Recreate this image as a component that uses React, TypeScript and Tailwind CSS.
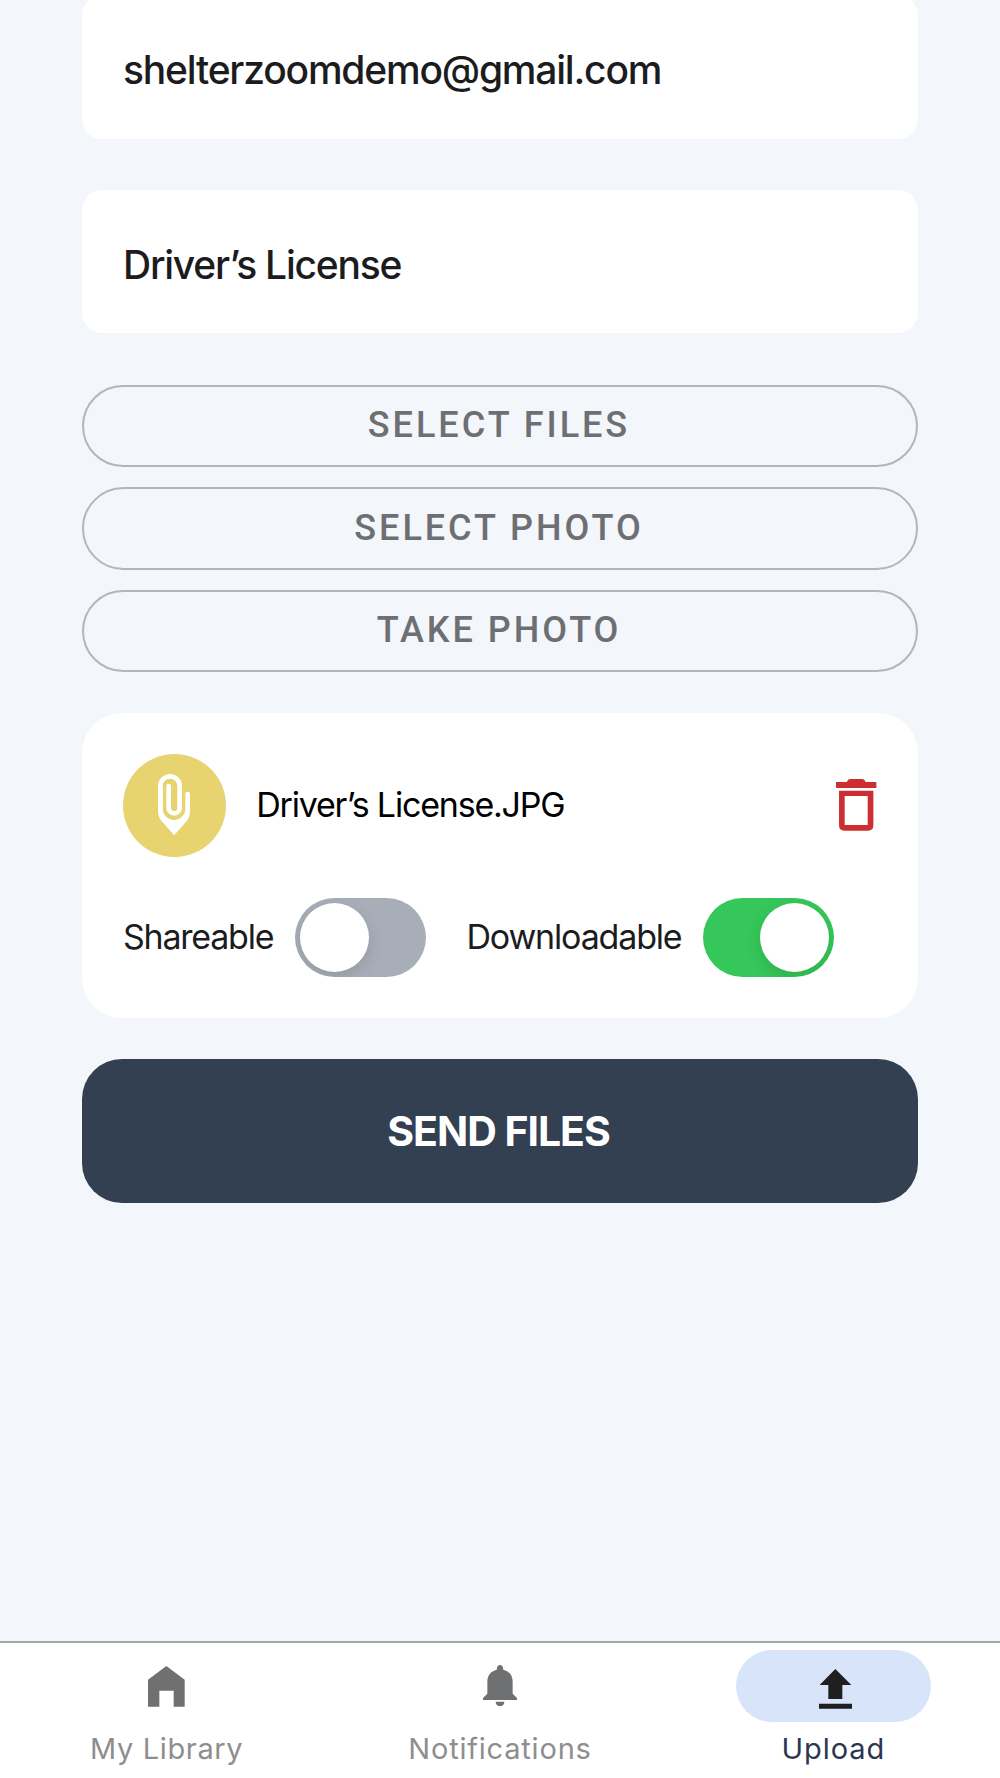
import React from "react";

function PaperclipIcon() {
  return (
    <svg viewBox="0 0 96 186" className="h-[62px] w-[32px]" fill="none">
      <path
        d="M32 36 V101 A16.5 17 0 0 0 65 101 V36 A29 29 0 0 0 7 36 V106"
        stroke="#fff"
        strokeWidth="14"
        strokeLinecap="round"
        strokeLinejoin="round"
      />
      <path
        d="M0 36 V110 Q0 130 14 145 L48.5 184 L83 145 Q96 130 96 110 V60 A7 7 0 0 0 82 60 V103 A34 35 0 0 1 14 103 V36 Z"
        fill="#fff"
      />
    </svg>
  );
}

function TrashIcon() {
  return (
    <svg viewBox="0 0 121 156" className="h-[52px] w-[40.4px]" fill="#cd2e31">
      <path d="M0 9 H32 Q36 0 42 0 H79 Q85 0 89 9 H121 V27 H0 Z" />
      <path
        fillRule="evenodd"
        d="M9 35 H112 V139 Q112 155 96 155 H25 Q9 155 9 139 Z M26 51 V138 H95 V51 Z"
      />
    </svg>
  );
}

function HomeIcon() {
  return (
    <svg viewBox="0 0 110 122" className="h-[40.7px] w-[36.7px]" fill="#6f7072">
      <path d="M55 0 L110 41 V122 H77 V74 H34 V122 H0 V41 Z" />
    </svg>
  );
}

function BellIcon() {
  return (
    <svg viewBox="0 0 102 124" className="h-[41.3px] w-[34px]" fill="#6f7072">
      <path d="M51 0 C57 0 60 4 61 14 C79 19 89 31 89 50 V86 L102 99 V105 H0 V99 L13 86 V50 C13 31 23 19 41 14 C42 4 45 0 51 0 Z" />
      <path d="M38 110 H64 C64 118 58 124 51 124 C44 124 38 118 38 110 Z" />
    </svg>
  );
}

function UploadIcon() {
  return (
    <svg viewBox="0 0 99 119" className="h-[39.7px] w-[33px]" fill="#1f1e20">
      <path d="M49 0 L97 48 H70 V90 H28 V48 H2 Z" />
      <path d="M0 104 H99 V119 H0 Z" />
    </svg>
  );
}

function Toggle({ on }: { on: boolean }) {
  return (
    <span
      role="switch"
      aria-checked={on}
      className={
        on
          ? "flex h-[79.3px] w-[131px] items-center justify-end overflow-hidden rounded-full bg-[#35c759] px-[5px]"
          : "flex h-[79.3px] w-[131px] items-center overflow-hidden rounded-full bg-[#a8aeb8] px-[5px]"
      }
    >
      <span className="size-[69.4px] rounded-full bg-white shadow-[0_6px_16px_rgba(0,0,0,0.12)]" />
    </span>
  );
}

const outlineButton =
  "flex h-[82.4px] items-center justify-center rounded-full border-2 border-[#b0b5be] pr-[2px] pb-[2px] font-['Roboto',sans-serif] text-[36px] leading-none font-medium tracking-[2.98px] text-[#6e6f72]";

export default function App() {
  return (
    <div className="flex h-[1778px] w-[1000px] flex-col overflow-hidden bg-[#f3f6fb] font-['Inter',sans-serif] text-[#1c1c1e]">
      <main className="flex flex-1 flex-col px-[82px]">
        <div className="-mt-[4.7px] flex h-[143.2px] shrink-0 items-center rounded-[20px] bg-white px-[41px] pt-[6px] text-[39px] font-medium tracking-[-1.2px]">
          shelterzoomdemo@gmail.com
        </div>
        <div className="mt-[51.5px] flex h-[143.3px] shrink-0 items-center rounded-[20px] bg-white px-[41px] pt-[7px] text-[39px] font-medium tracking-[-1.23px]">
          Driver’s License
        </div>

        <div className="mt-[51.7px] flex flex-col gap-5">
          <button className={outlineButton}>SELECT FILES</button>
          <button className={outlineButton}>SELECT PHOTO</button>
          <button className={outlineButton}>TAKE PHOTO</button>
        </div>

        <section className="mt-[40.6px] h-[305.3px] shrink-0 rounded-[40px] bg-white px-[41px] pt-[41.4px] text-[34px]">
          <div className="flex items-center">
            <div className="flex size-[102.7px] items-center justify-center rounded-full bg-[#e7d36f]">
              <PaperclipIcon />
            </div>
            <span className="ml-[30.5px] pb-[2px] tracking-[-1.2px] text-black">Driver’s License.JPG</span>
            <button className="mr-[0.4px] ml-auto" aria-label="Delete file">
              <TrashIcon />
            </button>
          </div>
          <div className="mt-[41px] flex items-center">
            <span className="w-[172px] pb-[2px] tracking-[-1.24px]">Shareable</span>
            <Toggle on={false} />
            <span className="ml-[40.5px] w-[236.5px] pb-[2px] tracking-[-1.17px]">Downloadable</span>
            <Toggle on />
          </div>
        </section>

        <button className="mt-[41px] flex h-[143.8px] shrink-0 items-center justify-center rounded-[40px] bg-[#324051] pt-px pr-[3px] text-[41px] font-bold tracking-[-1.03px] text-white">
          SEND FILES
        </button>
      </main>

      <nav className="grid h-[137px] shrink-0 grid-cols-3 border-t-2 border-[#a4a6b0] bg-white text-[29px] leading-[40px] text-[#8e8e90]">
        <div className="flex flex-col items-center pt-[7px]">
          <div className="flex h-[71.5px] items-center justify-center pt-px">
            <HomeIcon />
          </div>
          <span className="mt-[7px] tracking-[0.64px]">My Library</span>
        </div>
        <div className="flex flex-col items-center pt-[7px]">
          <div className="flex h-[71.5px] items-center justify-center">
            <BellIcon />
          </div>
          <span className="mt-[7px] tracking-[0.8px]">Notifications</span>
        </div>
        <div className="flex flex-col items-center pt-[7px]">
          <div className="flex h-[71.5px] w-[194.7px] items-center justify-center rounded-full bg-[#d7e4fa] pt-[7px] pl-[5px]">
            <UploadIcon />
          </div>
          <span className="mt-[7px] tracking-[0.95px] text-[#2b3650]">Upload</span>
        </div>
      </nav>
    </div>
  );
}
